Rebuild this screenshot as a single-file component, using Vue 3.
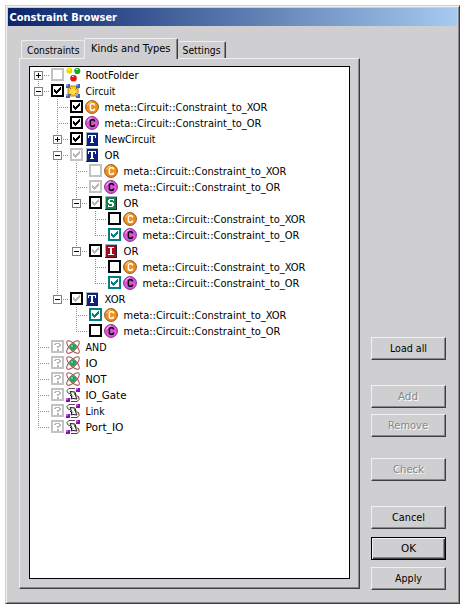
<script setup>
const rows = [
  { l: 0, x: '+', c: 'none', i: 'folder', t: 'RootFolder', w: 53 },
  { l: 0, x: '-', c: 'on', i: 'circuit', t: 'Circuit', w: 30 },
  { l: 1, c: 'on', i: 'co', t: 'meta::Circuit::Constraint_to_XOR', w: 163 },
  { l: 1, c: 'on', i: 'cp', t: 'meta::Circuit::Constraint_to_OR', w: 157 },
  { l: 1, x: '+', c: 'on', i: 'tb', t: 'NewCircuit', w: 51 },
  { l: 1, x: '-', c: 'grayon', i: 'tb', t: 'OR', w: 15 },
  { l: 2, c: 'none', i: 'co', t: 'meta::Circuit::Constraint_to_XOR', w: 163 },
  { l: 2, c: 'grayon', i: 'cp', t: 'meta::Circuit::Constraint_to_OR', w: 157 },
  { l: 2, x: '-', c: 'mixed', i: 'sg', t: 'OR', w: 15 },
  { l: 3, c: 'off', i: 'co', t: 'meta::Circuit::Constraint_to_XOR', w: 163 },
  { l: 3, c: 'teal', i: 'cp', t: 'meta::Circuit::Constraint_to_OR', w: 157, last: 1 },
  { l: 2, x: '-', c: 'mixed', i: 'tr', t: 'OR', w: 15, last: 1 },
  { l: 3, c: 'off', i: 'co', t: 'meta::Circuit::Constraint_to_XOR', w: 163 },
  { l: 3, c: 'teal', i: 'cp', t: 'meta::Circuit::Constraint_to_OR', w: 157, last: 1 },
  { l: 1, x: '-', c: 'mixed', i: 'tb', t: 'XOR', w: 21, last: 1 },
  { l: 2, c: 'teal', i: 'co', t: 'meta::Circuit::Constraint_to_XOR', w: 163 },
  { l: 2, c: 'off', i: 'cp', t: 'meta::Circuit::Constraint_to_OR', w: 157, last: 1 },
  { l: 0, c: 'q', i: 'atom', t: 'AND', w: 21 },
  { l: 0, c: 'q', i: 'atom', t: 'IO', w: 12 },
  { l: 0, c: 'q', i: 'atom', t: 'NOT', w: 21 },
  { l: 0, c: 'q', i: 'conn', t: 'IO_Gate', w: 41 },
  { l: 0, c: 'q', i: 'conn', t: 'Link', w: 19 },
  { l: 0, c: 'q', i: 'conn', t: 'Port_IO', w: 38, last: 1 },
]
// Vertical guide lines that pass through each row, one flag per ancestor level
const open = [true, false, false, false]
for (const [n, r] of rows.entries()) {
  r.guides = []
  for (let k = 0; k < r.l; k++) r.guides.push(open[k])
  open[r.l] = !r.last
  r.first = n === 0
}
const letters = {
  tb: { bg: '#10217b', ch: 'T' },
  sg: { bg: '#10804a', ch: 'S' },
  tr: { bg: '#a50820', ch: 'I' },
}
const buttons = [
  { t: 'Load all', w: 37, g: 25 },
  { t: 'Add', w: 20, d: true, g: 6 },
  { t: 'Remove', w: 40, d: true, g: 21 },
  { t: 'Check', w: 31, d: true, g: 25 },
  { t: 'Cancel', w: 33, g: 8 },
  { t: 'OK', w: 15, def: true, g: 7 },
  { t: 'Apply', w: 27, g: 0 },
]
</script>

<template>
  <div class="page">
    <div class="window">
      <header><svg width="112" height="18"><text x="1.5" y="13" textLength="107.5" lengthAdjust="spacingAndGlyphs">Constraint Browser</text></svg></header>
      <main>
        <section class="left">
          <nav>
            <div class="tab t1"><svg width="54" height="16"><text x="0" y="12" textLength="52.5" lengthAdjust="spacingAndGlyphs">Constraints</text></svg></div>
            <div class="tab active"><svg width="81" height="16"><text x="0" y="12" textLength="79.5" lengthAdjust="spacingAndGlyphs">Kinds and Types</text></svg></div>
            <div class="tab t3"><svg width="40" height="16"><text x=".5" y="12" textLength="38" lengthAdjust="spacingAndGlyphs">Settings</text></svg></div>
          </nav>
          <div class="panel">
            <div class="tree">
              <div v-for="(r, n) in rows" :key="n" class="row">
                <svg v-for="(g, k) in r.guides" :key="k" width="19" height="16" shape-rendering="crispEdges">
                  <path v-if="g" class="dots" d="M4.5 0V16" />
                </svg>
                <svg width="19" height="16" shape-rendering="crispEdges">
                  <path class="dots" :d="(r.first ? 'M4.5 8' : 'M4.5 0') + (r.last ? 'V8' : 'V16')" />
                  <path class="dots" d="M4 8.5H16" />
                  <g v-if="r.x">
                    <rect x=".5" y="4.5" width="8" height="8" fill="#fff" stroke="#808080" />
                    <path d="M2 8.5H7" stroke="#000" />
                    <path v-if="r.x === '+'" d="M4.5 6V11" stroke="#000" />
                  </g>
                </svg>
                <svg class="check" :class="r.c" width="13" height="13" shape-rendering="crispEdges">
                  <rect x="1" y="1" width="11" height="11" />
                  <path v-if="['on', 'teal', 'grayon', 'mixed'].includes(r.c)" class="tick" d="M3 5h1v1h1v1h1v-1h1v-1h1v-1h1v-1h1v3h-1v1h-1v1h-1v1h-1v1h-1v-1h-1v-1h-1z" />
                  <path v-if="r.c === 'q'" class="tick" d="M4 3h5v1h1v2h-1v1h-1v1h-2v-2h2v-2h-3v1h-2v-1h1zM6 9h2v2h-2z" />
                </svg>
                <svg class="icon" width="16" height="16">
                  <g v-if="r.i === 'folder'">
                    <circle cx="3.3" cy="3.8" r="3" fill="#e6dc00" /><circle cx="11.3" cy="4" r="3.1" fill="#18a828" /><circle cx="7.5" cy="11.2" r="3.3" fill="#e01810" />
                    <path d="M2 2.5h2M10 2.5h2M6 9.5h2" stroke="#fff" opacity=".8" />
                  </g>
                  <g v-else-if="r.i === 'circuit'">
                    <path d="M2 3H12V13H2z" fill="#ffc820" stroke="#c08800" />
                    <path d="M3 4L12 13M12 4L3 13" stroke="#886830" />
                    <circle cx="7" cy="8.2" r="2.8" fill="#ffe050" />
                    <path d="M0 1h4v4H0zM10 1h4v4h-4zM0 11h4v4H0zM10 11h4v4h-4z" fill="#4a60b0" />
                    <path d="M0 1h2v2H0zM10 1h2v2h-2zM0 11h2v2H0zM10 11h2v2h-2z" fill="#93a6df" />
                  </g>
                  <g v-else-if="r.i === 'co' || r.i === 'cp'">
                    <circle cx="7" cy="8" r="6.4" :fill="r.i === 'co' ? '#f09018' : '#e052dd'" :stroke="r.i === 'co' ? '#8b5729' : '#78317d'" />
                    <path d="M2.6 6.5Q3.5 3 7 2.6" fill="none" :stroke="r.i === 'co' ? '#ffcf80' : '#ffb5fb'" />
                    <path d="M9.4 6.6V5.6L8.6 4.8H6.4L5.4 5.8V10.2L6.4 11.2H8.6L9.4 10.4V9.4" fill="none" :stroke="r.i === 'co' ? '#fff' : '#000'" stroke-width="1.5" />
                  </g>
                  <g v-else-if="letters[r.i]" shape-rendering="crispEdges">
                    <rect x="1" y="1" width="12" height="14" :fill="letters[r.i].bg" />
                    <path d="M1 1.5H13M1.5 1V14" stroke="#a5b5c6" /><path d="M1 14.5H13M12.5 2V15" stroke="#222" />
                    <path v-if="r.i === 'tb'" d="M3 4h8v3h-1V5H8v6h1v1H5v-1h1V5H4v2H3z" fill="#fff" />
                    <path v-if="r.i === 'tr'" d="M4 4h6v1H8v6h2v1H4v-1h2V5H4z" fill="#fff" />
                    <path v-if="r.i === 'sg'" d="M5 4h5v2H9V5H6v2h3v1h1v3H9v1H4v-2h1v1h3V9H5V8H4V5h1z" fill="#fff" />
                  </g>
                  <g v-else-if="r.i === 'atom'">
                    <g fill="none" stroke="#a3525a"><ellipse cx="7" cy="8" rx="8.3" ry="3.3" transform="rotate(45 7 8)" /><ellipse cx="7" cy="8" rx="8.3" ry="3.3" transform="rotate(-45 7 8)" /></g>
                    <circle cx="7" cy="8" r="3.2" fill="#26a55c" /><circle cx="6" cy="7" r="1" fill="#80dca0" />
                  </g>
                  <g v-else>
                    <path d="M9 1.5H3L.8 3.5L2 6L5 7" fill="none" stroke="#555" /><path d="M5 14.5H11L13.2 12.5L12.5 9.5L9 8.5" fill="none" stroke="#703030" />
                    <path d="M4 4.5L9 5L9 8L11 12L7 11.5L5 12L6 9z" fill="#ddd" stroke="#222" /><path d="M6 6L9 10.5" stroke="#fff" stroke-width="1.5" />
                    <path d="M4 8L6 10M9 6L10 8" stroke="#111" />
                    <path d="M10 1h4v4h-4zM0 11h4v4H0z" fill="#8c10b0" /><path d="M10 1h2v2h-2zM0 11h2v2H0z" fill="#d050f0" />
                  </g>
                </svg>
                <svg class="label" :width="r.w + 2" height="16"><text x="-.5" y="12" :textLength="r.w" lengthAdjust="spacingAndGlyphs">{{ r.t }}</text></svg>
              </div>
            </div>
          </div>
        </section>
        <aside>
          <button v-for="b in buttons" :key="b.t" :class="{ def: b.def }" :disabled="b.d" :style="{ marginBottom: b.g + 'px' }">
            <svg :width="b.w + 1" height="16"><text x="0" y="12" :textLength="b.w" lengthAdjust="spacingAndGlyphs">{{ b.t }}</text></svg>
          </button>
        </aside>
      </main>
    </div>
  </div>
</template>

<style>
body { margin: 0; background: #fff; }
</style>
<style scoped>
.page { width: 465px; height: 609px; padding: 5px; box-sizing: border-box; background: #fff; font: 11px "DejaVu Sans Condensed", "DejaVu Sans", sans-serif; }
.page * { box-sizing: border-box; }
svg { display: block; flex: none; overflow: visible; }
.window { width: 455px; height: 599px; background: #cfcfd1; border: 1px solid; border-color: #cfcfd1 #3e3e40 #3e3e40 #cfcfd1; box-shadow: inset 1px 1px #f0f0f0, inset -1px -1px #878789; padding: 2px; }
header { height: 18px; background: linear-gradient(90deg, #0a246a, #a6caf0); color: #fff; font-weight: bold; }
header text { fill: #fff; }
main { display: flex; padding: 12px 0 0 11px; }
.left { width: 341px; }
nav { display: flex; align-items: flex-end; height: 21px; margin-bottom: -1px; padding-left: 2px; }
.tab { height: 18px; border: 1px solid; border-color: #eee #3e3e40 transparent #eee; border-bottom: 0; border-radius: 2px 2px 0 0; margin-bottom: 1px; padding: 1px 0 0 5px; }
.t1 { width: 63px; border-right: 0; }
.tab.active { width: 94px; height: 21px; background: #cfcfd1; margin-bottom: 0; padding: 1px 0 0 6px; box-shadow: inset -1px 0 #878789; }
.t3 { width: 48px; height: 17px; border-left: 0; box-shadow: inset -1px 0 #878789; padding: 0 0 0 4px; }
.panel { height: 531px; border: 1px solid; border-color: #eee #3e3e40 #3e3e40 #eee; box-shadow: inset -1px -1px #878789; padding: 7px 9px 9px; }
.tree { height: 513px; width: 321px; border: 1px solid #000; background: #fff; padding-left: 4px; }
.row { display: flex; height: 16px; }
.dots { stroke: #909090; stroke-dasharray: 1 1; fill: none; }
.check { margin: 1px 0 0 -2px; }
.check rect { fill: #fff; stroke: #000; stroke-width: 2; }
.none rect, .grayon rect, .q rect { stroke: #c3c3c3; }
.teal rect { stroke: #008080; }
.tick { fill: #000; }
.grayon .tick, .mixed .tick, .q .tick { fill: #b8b8b8; }
.teal .tick { fill: #008080; }
.icon { margin-left: 2px; }
.label { margin-left: 4px; }
aside { margin-left: 11px; padding-top: 299px; display: flex; flex-direction: column; }
button { display: flex; width: 75px; height: 23px; flex: none; justify-content: center; align-items: flex-start; padding: 2px 0 0; border: 1px solid; border-color: #f1f1f1 #3e3e40 #3e3e40 #f1f1f1; box-shadow: inset -1px -1px #878789; background: #cfcfd1; color: #000; font: inherit; }
button.def { border-color: #000; box-shadow: inset 1px 1px #f1f1f1, inset -1px -1px #3e3e40, inset -2px -2px #878789; }
button:disabled text { fill: #87878a; text-shadow: 1px 1px #fff; }
</style>
